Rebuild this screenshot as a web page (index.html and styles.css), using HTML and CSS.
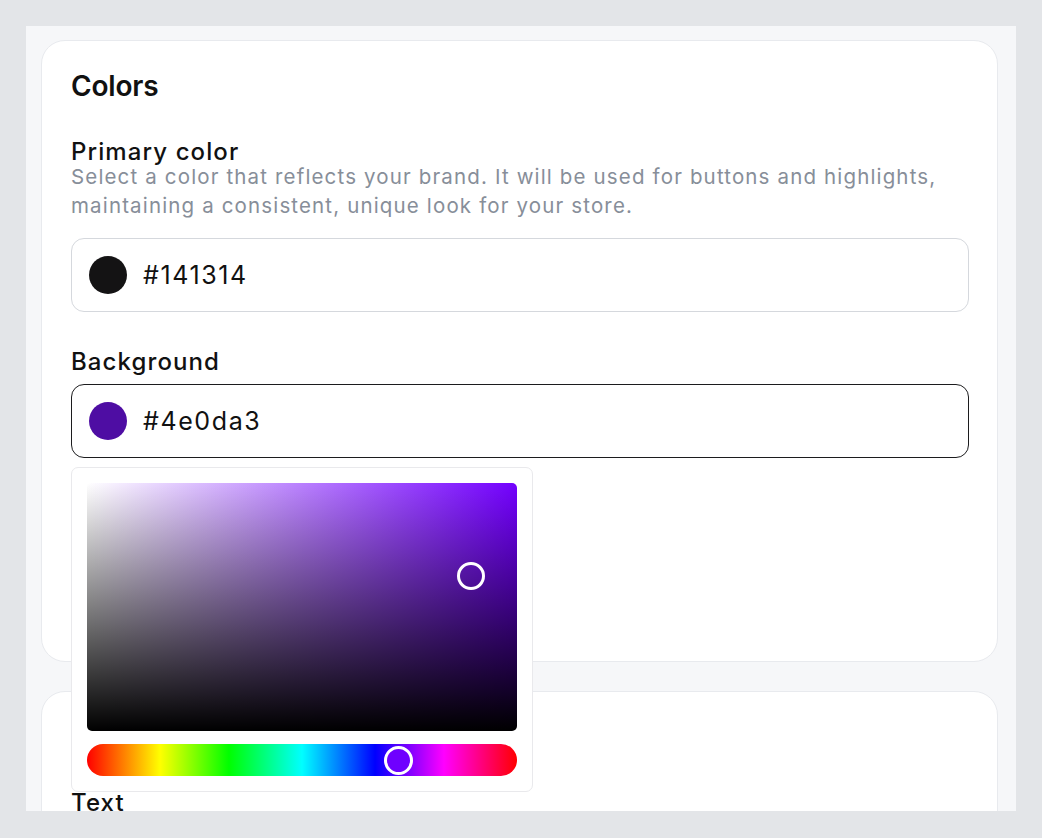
FILE: index.html
```html
<!DOCTYPE html>
<html lang="en">
<head>
  <meta charset="UTF-8" />
  <meta name="viewport" content="width=device-width, initial-scale=1.0"/>
  <title>Store theme</title>
  <link rel="stylesheet" href="styles.css">
</head>
<body>

  <div class="frame">

    <section class="card card-open">
      <h2>Colors</h2>

      <div class="field">
        <label class="field-label">Primary color</label>
        <p class="field-help">Select a color that reflects your brand. It will be used for buttons and highlights, maintaining a consistent, unique look for your store.</p>
        <div class="color-input">
          <span class="swatch swatch-primary"></span>
          <span class="color-value">#141314</span>
        </div>
      </div>

      <div class="field picker-field">
        <label class="field-label">Background</label>
        <div class="color-input focused">
          <span class="swatch swatch-bg"></span>
          <span class="color-value">#4e0da3</span>
        </div>

        <div class="picker">
          <div class="saturation">
            <span class="sat-thumb"></span>
          </div>
          <div class="hue">
            <span class="hue-thumb"></span>
          </div>
        </div>
      </div>
    </section>

    <section class="card">
      <h2>Typography</h2>
      <div class="field">
        <label class="field-label">Text</label>
      </div>
    </section>

  </div>

</body>
</html>
```

FILE: styles.css
```css
* {
  margin: 0;
  padding: 0;
  box-sizing: border-box;
}

body {
  font-family: Inter, "Noto Sans", sans-serif;
  background: #e3e5e8;
  color: #111111;
  padding: 26px;
}

.frame {
  width: 990px;
  height: 785px;
  overflow: hidden;
  background: #f6f7f9;
  padding: 14px 18px 0 15px;
}

.card {
  background: #ffffff;
  border: 1px solid #e8eaee;
  border-radius: 24px;
  padding: 28px 28px 30px 29px;
  margin-bottom: 29px;
}

.card-open {
  min-height: 622px;
}

h2 {
  font-size: 28px;
  font-weight: 600;
  line-height: 34px;
  letter-spacing: -0.2px;
}

.field {
  margin-top: 37px;
}

.field + .field {
  margin-top: 38px;
}

.field-label {
  display: block;
  font-size: 24px;
  font-weight: 500;
  line-height: 24px;
  letter-spacing: 1.1px;
}

.field-help {
  font-size: 20.5px;
  line-height: 29px;
  color: #878e99;
  letter-spacing: 1.15px;
  margin-top: -2px;
}

.color-input {
  display: flex;
  align-items: center;
  gap: 16px;
  height: 74px;
  margin-top: 10px;
  padding: 0 17px;
  border: 1px solid #d5d8dd;
  border-radius: 13px;
  background: #ffffff;
}

.field-help + .color-input {
  margin-top: 18px;
}

.color-input.focused {
  border-color: #1c1c1e;
}

.swatch {
  width: 38px;
  height: 38px;
  border-radius: 50%;
  flex-shrink: 0;
}

.swatch-primary {
  background: #141314;
}

.swatch-bg {
  background: #4e0da3;
}

.color-value {
  font-size: 25px;
  letter-spacing: 1.6px;
  color: #111111;
}

/* colour picker popover */
.picker-field {
  position: relative;
}

.picker {
  position: absolute;
  left: 0;
  top: calc(100% + 9px);
  width: 462px;
  padding: 15px;
  background: #ffffff;
  border: 1px solid #e9e9ec;
  border-radius: 7px;
  z-index: 2;
}

.saturation {
  position: relative;
  height: 248px;
  border-radius: 5px;
  background:
    linear-gradient(to top, #000000, rgba(0, 0, 0, 0)),
    linear-gradient(to right, #ffffff, #7300ff);
}

.sat-thumb {
  position: absolute;
  left: 370px;
  top: 79px;
  width: 28px;
  height: 28px;
  border: 3px solid #ffffff;
  border-radius: 50%;
}

.hue {
  position: relative;
  height: 32px;
  margin-top: 13px;
  border-radius: 16px;
  background: linear-gradient(to right, #ff0000 0%, #ffff00 17%, #00ff00 33%, #00ffff 50%, #0000ff 67%, #ff00ff 83%, #ff0000 100%);
}

.hue-thumb {
  position: absolute;
  left: 297px;
  top: 2px;
  width: 29px;
  height: 29px;
  border: 3px solid #ffffff;
  border-radius: 50%;
  background: #6f00ff;
}
```
